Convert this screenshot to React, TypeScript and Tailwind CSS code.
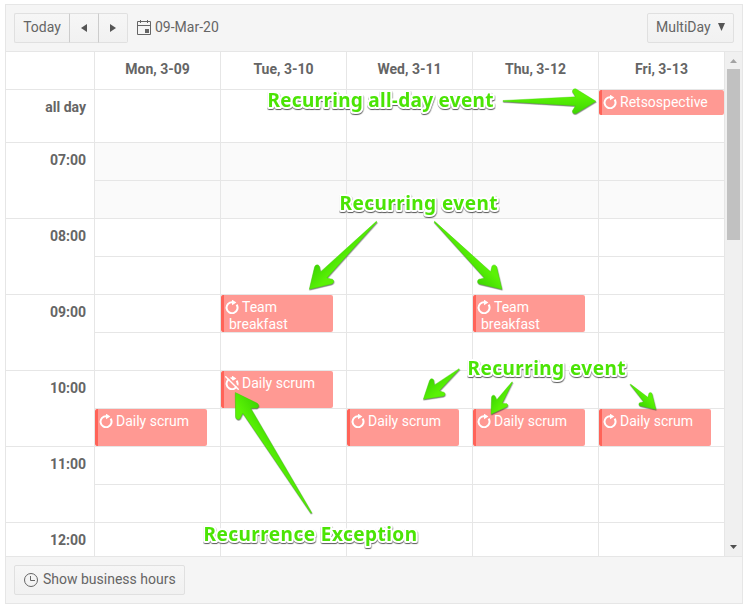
import React from 'react';

const days = ['Mon, 3-09', 'Tue, 3-10', 'Wed, 3-11', 'Thu, 3-12', 'Fri, 3-13'];

type Item = { title: string; exception?: boolean };
type Slot = { label?: string; shaded?: boolean; short?: boolean; events?: Record<number, Item> };

const team: Item = { title: 'Team breakfast' };
const scrum: Item = { title: 'Daily scrum' };

const slots: Slot[] = [
  { label: '07:00', shaded: true },
  { shaded: true },
  { label: '08:00' },
  {},
  { label: '09:00', events: { 1: team, 3: team } },
  {},
  { label: '10:00', events: { 1: { title: 'Daily scrum', exception: true } } },
  { events: { 0: scrum, 2: scrum, 3: scrum, 4: scrum } },
  { label: '11:00' },
  {},
  { label: '12:00', short: true },
];

function RecurIcon({ exception }: { exception?: boolean }) {
  return (
    <svg className="mr-[3px] inline-block h-[14px] w-[14px] align-[-2px]" viewBox="0 0 14 14" fill="none">
      <path d="M7.6 2.2A5.5 5.5 0 1 0 11.6 4.6" stroke="white" strokeWidth="2" />
      <path d="M7 -.3L11.4 2.5L7 5.3Z" fill="white" />
      {exception && (
        <>
          <path d="M1.5-.6L14.5 12.4" stroke="#ff9993" strokeWidth="1.5" />
          <path d="M.3.3L13.7 13.7" stroke="white" strokeWidth="1.4" />
        </>
      )}
    </svg>
  );
}

function EventCard({ item, allDay }: { item: Item; allDay?: boolean }) {
  return (
    <div
      className={
        'overflow-hidden rounded-[2px] border-l-[3px] border-[#ff6358] bg-[#ff9993] pt-[4px] text-white ' +
        (allDay ? 'h-[25px] w-[125px]' : 'h-[37px] w-[112px]')
      }
    >
      <div className="pr-6 pl-[5px] -indent-[4px] leading-[17px]">
        <span className={item === team ? '' : 'whitespace-nowrap'}>
          <RecurIcon exception={item.exception} />
          {item.title}
        </span>
      </div>
    </div>
  );
}

type ArrowProps = { tip: [number, number]; tail: [number, number]; scale: number };

function Arrow({ tip, tail, scale }: ArrowProps) {
  const dx = tip[0] - tail[0];
  const dy = tip[1] - tail[1];
  const len = Math.hypot(dx, dy) / scale;
  const angle = (Math.atan2(dy, dx) * 180) / Math.PI;
  const d = `M0 0L-19.5-12C-22.5-13.6-25-10.2-22.6-8L-20.5-4.4L${-len}-.5V.5L-20.5 4.4L-22.6 8C-25 10.2-22.5 13.6-19.5 12Z`;
  return (
    <g filter="url(#arrowShadow)">
      <path
        d={d}
        transform={`translate(${tip[0]} ${tip[1]}) rotate(${angle}) scale(${scale})`}
        fill="url(#arrowFill)"
        stroke="#42d406"
        strokeWidth=".4"
      />
    </g>
  );
}

const arrows: ArrowProps[] = [
  { tip: [596, 101.3], tail: [503, 101], scale: 1 },
  { tip: [309.3, 289.3], tail: [376.7, 221.7], scale: 1 },
  { tip: [502, 289.3], tail: [434.3, 221.7], scale: 1 },
  { tip: [423.3, 399.3], tail: [459.3, 369], scale: 0.87 },
  { tip: [491, 414.3], tail: [512.3, 382], scale: 0.75 },
  { tip: [656, 409.5], tail: [630.3, 384.3], scale: 0.7 },
  { tip: [235.3, 392.5], tail: [311.3, 513], scale: 1.05 },
];

const notes: { x: number; y: number; w: number; text: string }[] = [
  { x: 267.5, y: 107, w: 226, text: 'Recurring all-day event' },
  { x: 339.5, y: 210, w: 158, text: 'Recurring event' },
  { x: 467.5, y: 375, w: 158, text: 'Recurring event' },
  { x: 203.5, y: 541, w: 213.5, text: 'Recurrence Exception' },
];

function Annotations() {
  return (
    <svg className="pointer-events-none absolute top-0 left-0" width="745" height="611" viewBox="0 0 745 611">
      <defs>
        <linearGradient id="arrowFill" x1="0" y1="0" x2="0" y2="1">
          <stop offset="0.3" stopColor="#5af205" />
          <stop offset="1" stopColor="#3ed602" />
        </linearGradient>
        <filter id="arrowShadow" filterUnits="userSpaceOnUse" x="0" y="0" width="745" height="611" colorInterpolationFilters="sRGB">
          <feDropShadow dx="0.4" dy="1" stdDeviation="0.5" floodColor="#333" floodOpacity="0.6" />
        </filter>
        <filter id="textShadow" filterUnits="userSpaceOnUse" x="0" y="0" width="745" height="611" colorInterpolationFilters="sRGB">
          <feDropShadow dx="0.3" dy="1.1" stdDeviation="0.5" floodColor="#000" floodOpacity="0.6" />
        </filter>
      </defs>
      {arrows.map((a, i) => (
        <Arrow key={i} {...a} />
      ))}
      <g filter="url(#textShadow)">
        {notes.map((n, i) => (
          <text
            key={i}
            x={n.x}
            y={n.y}
            textLength={n.w}
            className="fill-[#4be405] stroke-white font-['Noto_Sans','Open_Sans',sans-serif] text-[19px] font-bold"
            strokeWidth="4"
            strokeLinejoin="round"
            paintOrder="stroke"
          >
            {n.text}
          </text>
        ))}
      </g>
    </svg>
  );
}

const button = 'flex h-[30px] items-center border border-[#e0e0e0] bg-linear-to-b from-[#f6f6f6] to-[#f1f1f1]';

export default function App() {
  return (
    <div className="relative h-[611px] w-[745px] overflow-hidden bg-white pt-1 pl-[5px] font-[Roboto,sans-serif] text-[14px] leading-5 text-[#656565]">
      <div className="flex h-[600px] w-[738px] flex-col border border-[#e6e6e6] bg-[#f5f5f5]">
        <header className="flex h-[47px] shrink-0 items-center border-b border-[#e6e6e6] px-2">
          <div className="flex">
            <button className={button + ' w-[56px] justify-center rounded-l-[2px] border-r-[#cccccc] pb-[2px]'}>Today</button>
            <button className={button + ' w-[29px] justify-center border-l-0 border-r-[#cccccc]'}>
              <svg width="6" height="8" viewBox="0 0 6 8"><path d="M6 0V8L0 4Z" fill="#555" /></svg>
            </button>
            <button className={button + ' w-[29px] justify-center rounded-r-[2px] border-l-0'}>
              <svg width="6" height="8" viewBox="0 0 6 8"><path d="M0 0V8L6 4Z" fill="#555" /></svg>
            </button>
          </div>
          <div className="ml-[9px] flex items-center gap-[4px]">
            <svg width="14" height="16" viewBox="0 0 14 16" fill="none" stroke="#656565">
              <path d="M.5 1.5H13.5V14.5H.5ZM.5 5.5H13.5M3.5 0V3M10.5 0V3" />
              <path d="M8 9H12V13H8Z" fill="#656565" stroke="none" />
            </svg>
            <span className="pb-[2px]">09-Mar-20</span>
          </div>
          <button className={button + ' ml-auto w-[87px] justify-between rounded-[2px] px-[8px]'}>
            <span className="pb-[2px]">MultiDay</span>
            <svg className="mb-[2px]" width="7" height="8" viewBox="0 0 7 8"><path d="M0 0H7L3.5 8Z" fill="#555" /></svg>
          </button>
        </header>

        <main className="flex h-[504px] shrink-0 bg-white">
          <div className="w-[719px] border-r border-[#e6e6e6]">
            <div className="flex h-[38px] border-b border-[#e6e6e6] font-bold">
              <div className="w-[89px] border-r border-[#e6e6e6]" />
              {days.map((d, i) => (
                <div key={d} className={'pt-[7px] text-center ' + (i < 4 ? 'w-[126px] border-r border-[#e6e6e6]' : 'w-[125px]')}>
                  {d}
                </div>
              ))}
            </div>
            <div className="flex h-[53px] border-b border-[#e6e6e6]">
              <div className="w-[89px] border-r border-[#e6e6e6] pt-[7px] pr-2 text-right font-bold">all day</div>
              {days.map((d, i) => (
                <div key={d} className={i < 4 ? 'w-[126px] border-r border-[#e6e6e6]' : 'w-[125px]'}>
                  {i === 4 && <EventCard item={{ title: 'Retsospective' }} allDay />}
                </div>
              ))}
            </div>
            {slots.map((s, r) => (
              <div key={r} className={'flex ' + (s.short ? 'h-[34px]' : 'h-[38px]')}>
                <div
                  className={
                    'w-[89px] border-r border-[#e6e6e6] pt-[7px] pr-2 text-right font-bold ' +
                    (s.label ? '' : 'border-b')
                  }
                >
                  {s.label}
                </div>
                {days.map((d, i) => (
                  <div
                    key={d}
                    className={
                      'border-[#e6e6e6] ' +
                      (s.short ? '' : 'border-b ') +
                      (s.shaded ? 'bg-[#fafafa] ' : '') +
                      (i < 4 ? 'w-[126px] border-r' : 'w-[125px]')
                    }
                  >
                    {s.events?.[i] && <EventCard item={s.events[i]} />}
                  </div>
                ))}
              </div>
            ))}
          </div>
          <div className="flex w-[17px] flex-col items-center bg-[#f0f0f0] pt-[7px] pb-[7px]">
            <svg width="7" height="4" viewBox="0 0 7 4"><path d="M0 4L3.5 0L7 4Z" fill="#a3a3a3" /></svg>
            <div className="mt-[6px] h-[171px] w-[13px] bg-[#c1c1c1]" />
            <svg className="mt-auto" width="7" height="4" viewBox="0 0 7 4"><path d="M0 0H7L3.5 4Z" fill="#505050" /></svg>
          </div>
        </main>

        <footer className="flex h-[47px] items-center border-t border-[#e6e6e6] px-2">
          <button className={button + ' w-[171px] rounded-[2px] pl-[9px]'}>
            <svg className="mr-[5px]" width="14" height="14" viewBox="0 0 14 14" fill="none" stroke="#656565">
              <circle cx="7" cy="7" r="6.5" />
              <path d="M6.5 3V7.5H11" />
            </svg>
            <span className="pb-[2px]">Show business hours</span>
          </button>
        </footer>
      </div>
      <Annotations />
    </div>
  );
}
